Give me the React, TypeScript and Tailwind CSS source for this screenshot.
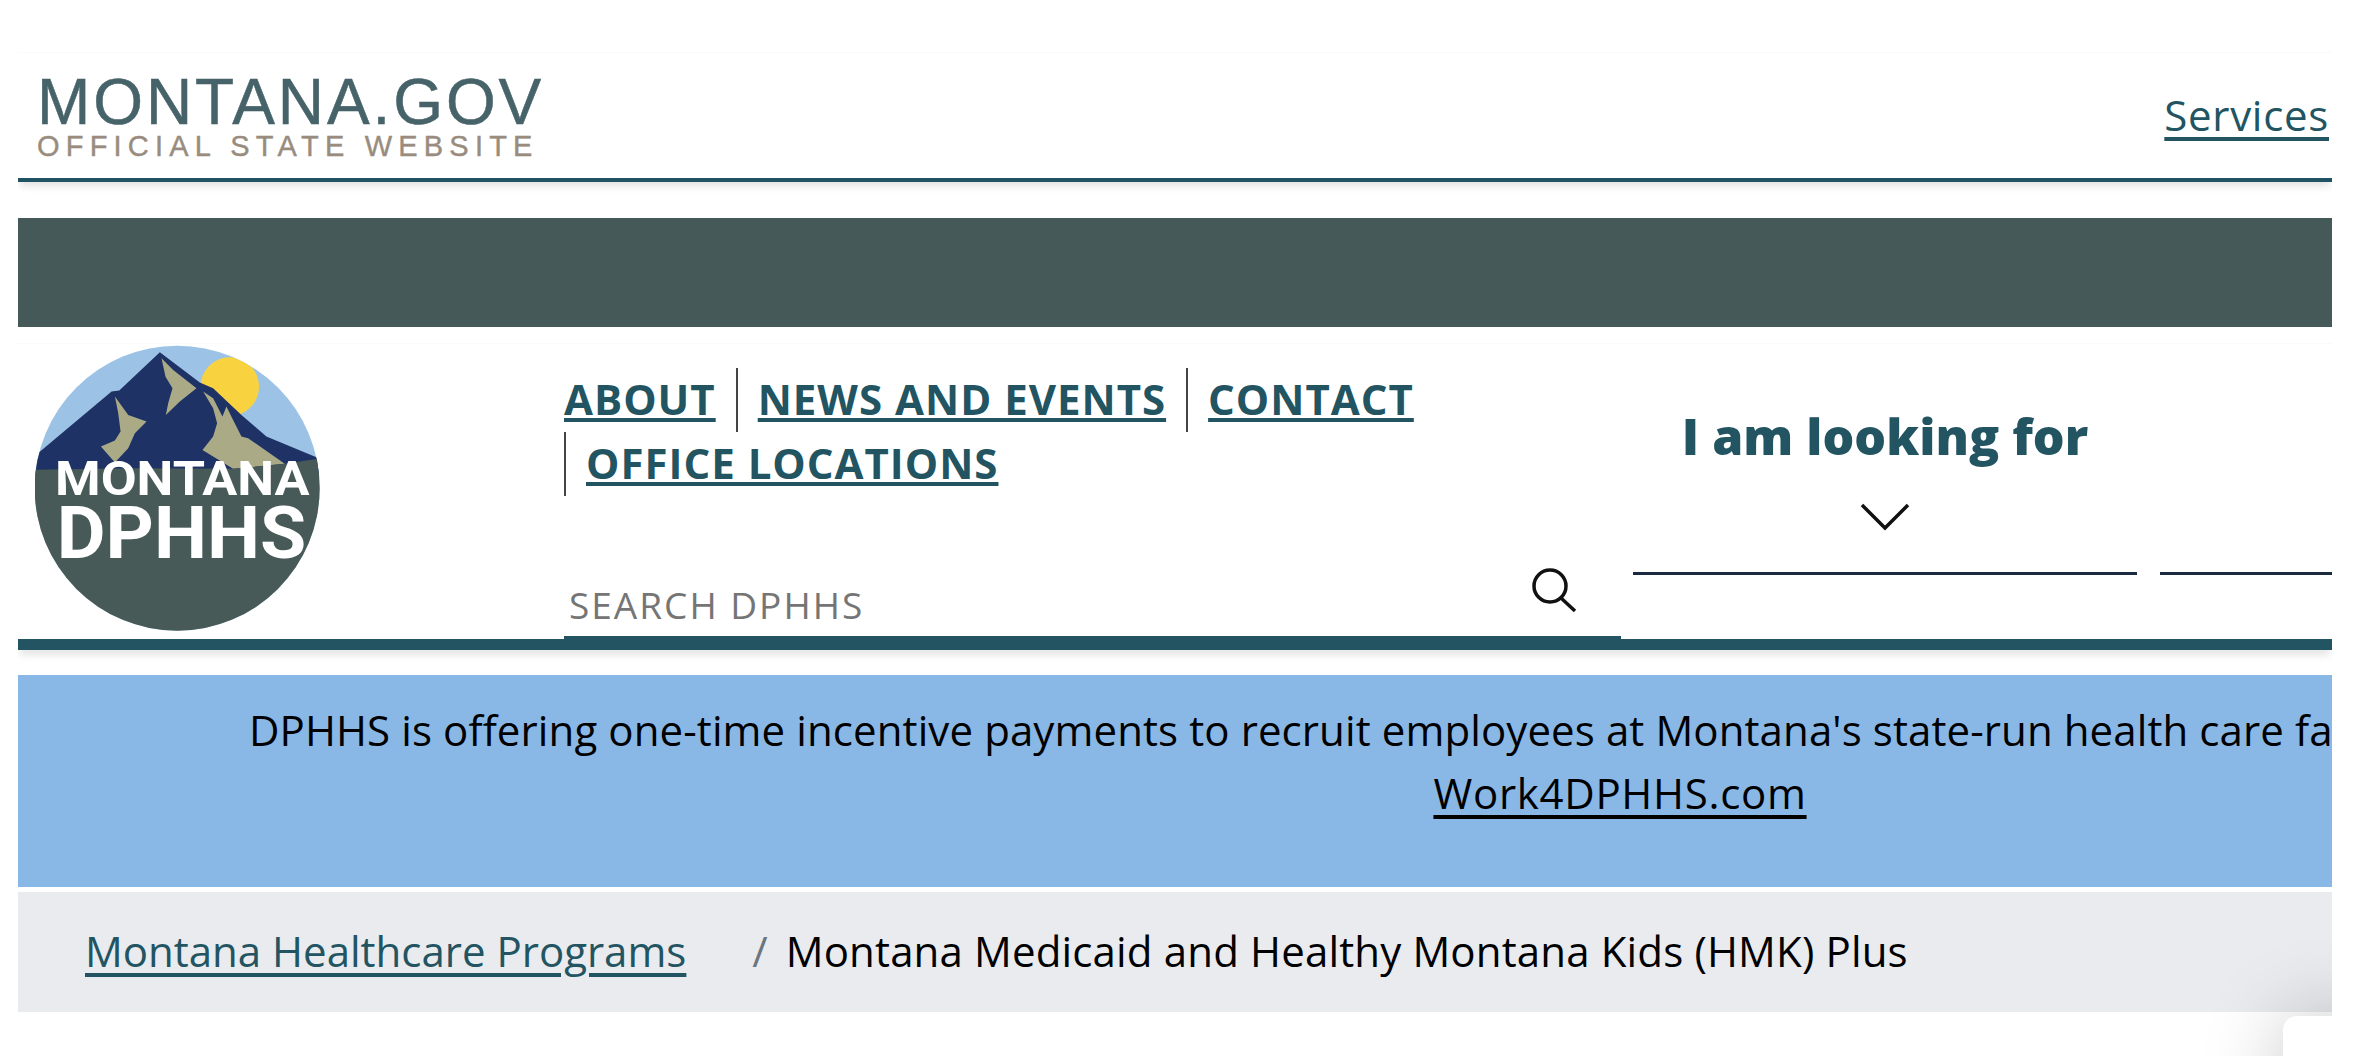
const navLinks = ["ABOUT", "NEWS AND EVENTS", "CONTACT", "OFFICE LOCATIONS"];

function DphhsLogo() {
  return (
    <svg viewBox="105 75 856 862" className="h-[287px] w-[285px] shrink-0">
      <defs>
        <clipPath id="logo-circle">
          <circle cx="532" cy="505" r="428" />
        </clipPath>
      </defs>
      <g clipPath="url(#logo-circle)">
        <rect x="100" y="70" width="870" height="870" fill="#9cc3e6" />
        <circle cx="690" cy="200" r="88" fill="#f8d33f" />
        <path
          d="M100 412 L335 215 L358 212 L480 97 L600 188 L640 205 L725 285 L800 350 L965 418 L965 470 L100 470 Z"
          fill="#1f3265"
        />
        <path
          d="M485 115 L520 150 L590 205 L540 245 L498 285 L505 250 L518 205 L497 170 Z"
          fill="#abaa87"
        />
        <path
          d="M345 230 L385 285 L440 305 L405 340 L385 385 L345 428 L303 380 L345 362 L362 335 L355 280 Z"
          fill="#abaa87"
        />
        <path
          d="M610 215 L640 235 L668 290 L680 260 L700 300 L725 350 L745 355 L855 432 L700 447 L608 390 L640 350 L652 310 L640 265 Z"
          fill="#abaa87"
        />
        <path d="M100 450 L400 445 L700 447 L855 432 L965 415 L965 940 L100 940 Z" fill="#475a57" />
      </g>
      <text
        x="165"
        y="525"
        fill="#fff"
        fontFamily="Roboto, sans-serif"
        fontWeight="700"
        fontSize="146"
        textLength="765"
        lengthAdjust="spacingAndGlyphs"
      >
        MONTANA
      </text>
      <text
        x="170"
        y="715"
        fill="#fff"
        fontFamily="Roboto, sans-serif"
        fontWeight="700"
        fontSize="218"
        textLength="750"
        lengthAdjust="spacingAndGlyphs"
      >
        DPHHS
      </text>
    </svg>
  );
}

function LookingFor({ label }: { label?: string }) {
  return (
    <button className="flex h-[231px] w-[504px] shrink-0 flex-col items-center border-b-[3px] border-[#1b2b3f]">
      <span className="mt-[54px] h-[76px] text-[50px] leading-[76px] font-extrabold text-[#225462]">{label}</span>
      {label && (
        <svg viewBox="0 0 50 30" className="mt-[28px] h-[30px] w-[50px]" fill="none" stroke="#111" strokeWidth="3.5">
          <path d="M2 3 L25 26 L48 3" />
        </svg>
      )}
    </button>
  );
}

export default function App() {
  return (
    <div className="h-[1056px] w-full overflow-hidden bg-white pl-[18px] pr-[36px] font-['Open_Sans',sans-serif]">
      <div className="relative h-[1056px] overflow-hidden">
        {/* state header */}
        <header className="mt-[52px] flex h-[130px] items-start justify-between border-t border-[#fafafa] border-b-4 border-b-[#1f5263] pr-[3px] shadow-[0_6px_8px_-2px_rgba(0,0,0,0.12)]">
          <div className="pl-[19px] pt-[17px] font-['Liberation_Sans',sans-serif]">
            <div className="text-[64px] leading-[64px] tracking-[2.9px] text-[#47636a] [-webkit-text-stroke:0.5px_#47636a]">
              MONTANA.GOV
            </div>
            <div className="text-[29px] leading-[24px] tracking-[6.2px] text-[#998c7e] [-webkit-text-stroke:0.4px_#998c7e]">
              OFFICIAL STATE WEBSITE
            </div>
          </div>
          <a className="mt-[34px] text-[42px] leading-[56px] tracking-[0.7px] text-[#225462] underline underline-offset-[6px]">
            Services
          </a>
        </header>

        <div className="mt-[36px] h-[109px] bg-[#455a58]" />

        {/* agency header */}
        <div className="mt-[16px] flex h-[296px] items-start border-t border-[#fafafa]">
          <div className="w-[546px] pl-[17px] pt-[1px]">
            <DphhsLogo />
          </div>
          <div className="flex h-[295px] w-[1057px] flex-col justify-between pt-[24px]">
            <ul className="flex flex-wrap">
              {navLinks.map((link, i) => (
                <li
                  key={link}
                  className={
                    i === 0
                      ? "h-[64px] pr-[20px] text-[42px] leading-[62px] font-bold tracking-[1px] text-[#225462]"
                      : "h-[64px] border-l-2 border-[#444] px-[20px] text-[42px] leading-[62px] font-bold tracking-[1px] text-[#225462]"
                  }
                >
                  <a className="underline underline-offset-[3px]">{link}</a>
                </li>
              ))}
            </ul>
            <div className="flex h-[56px] items-start justify-between border-b-[3px] border-[#225462] pl-[5px] pr-[44px]">
              <span className="-mt-[3px] text-[37px] leading-[50px] tracking-[2px] text-[#757575]">SEARCH DPHHS</span>
              <svg viewBox="0 0 46 46" className="-mt-[16px] h-[46px] w-[46px]" fill="none" stroke="#111" strokeWidth="3.5">
                <circle cx="19" cy="19" r="16" />
                <path d="M30 31 L44 44" />
              </svg>
            </div>
          </div>
          <div className="flex min-w-0 flex-1 gap-[23px] overflow-hidden pl-[12px]">
            <LookingFor label="I am looking for" />
            <LookingFor />
          </div>
        </div>

        <div className="h-[11px] bg-[#225462] shadow-[0_6px_8px_-2px_rgba(0,0,0,0.15)]" />

        {/* alert banner */}
        <div className="mt-[25px] h-[212px] overflow-hidden bg-[#8ab8e6] pl-[231px] pt-[23px] text-[42px] leading-[63px] text-black">
          <div className="w-[2742px]">
            <p className="whitespace-nowrap tracking-[0.1px]">
              DPHHS is offering one-time incentive payments to recruit employees at Montana's state-run health care
              facilities. Learn more at
            </p>
            <p className="text-center tracking-[0.7px] underline underline-offset-[6px]">Work4DPHHS.com</p>
          </div>
        </div>

        {/* breadcrumb */}
        <nav className="mt-[5px] flex h-[120px] items-center bg-[#e9ebef] pl-[67px] pb-[3px] text-[42px]">
          <a className="text-[#225462] underline underline-offset-[6px]">Montana Healthcare Programs</a>
          <span className="ml-[66px] text-[#6c757d]">/</span>
          <span className="ml-[18px] tracking-[0.15px] text-black">
            Montana Medicaid and Healthy Montana Kids (HMK) Plus
          </span>
        </nav>

        {/* chat widget peeking in from the corner */}
        <div className="absolute left-[2265px] top-[1016px] h-[120px] w-[120px] rounded-tl-[14px] bg-white shadow-[0_0_80px_rgba(0,0,0,0.22)]" />
      </div>
    </div>
  );
}
